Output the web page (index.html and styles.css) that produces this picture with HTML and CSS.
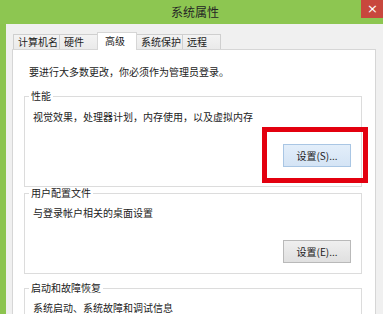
FILE: index.html
```html
<!DOCTYPE html>
<html lang="zh-CN">
<head>
<meta charset="utf-8">
<title>系统属性</title>
<link rel="stylesheet" href="styles.css">
</head>
<body>
<div class="window">
  <div class="titlebar">
    <span class="title">系统属性</span>
    <span class="close">×</span>
  </div>
  <div class="client">
    <div class="tabs">
      <div class="tab">计算机名</div>
      <div class="tab">硬件</div>
      <div class="tab active">高级</div>
      <div class="tab">系统保护</div>
      <div class="tab">远程</div>
    </div>
    <div class="panel">
      <p class="intro">要进行大多数更改，你必须作为管理员登录。</p>
      <fieldset class="group g1">
        <legend>性能</legend>
        <div class="group-body">
          <p class="desc">视觉效果，处理器计划，内存使用，以及虚拟内存</p>
          <div class="actions"><button class="btn btn-default">设置(S)...</button></div>
        </div>
      </fieldset>
      <fieldset class="group g2">
        <legend>用户配置文件</legend>
        <div class="group-body">
          <p class="desc">与登录帐户相关的桌面设置</p>
          <div class="actions"><button class="btn">设置(E)...</button></div>
        </div>
      </fieldset>
      <fieldset class="group g3">
        <legend>启动和故障恢复</legend>
        <div class="group-body">
          <p class="desc">系统启动、系统故障和调试信息</p>
        </div>
      </fieldset>
    </div>
  </div>
  <div class="highlight"></div>
</div>
</body>
</html>
```

FILE: styles.css
```css
html, body {
  margin: 0;
  padding: 0;
  background: #f0f0f0;
}

.window {
  position: relative;
  width: 383px;
  height: 314px;
  overflow: hidden;
  background: #8cc44f;
  font-family: "Noto Sans CJK SC", "Microsoft YaHei", sans-serif;
  font-size: 10px;
  color: #222;
}

.titlebar {
  height: 24px;
  display: flex;
  align-items: center;
  justify-content: center;
  padding-left: 7px;
  background: #8dc651;
}

.title {
  font-size: 12px;
  line-height: 14px;
  color: #262626;
}

.close {
  position: absolute;
  right: 0;
  top: 0;
  width: 21px;
  height: 18px;
  background: #c8473d;
  color: #fff;
  font-family: "DejaVu Sans", sans-serif;
  font-size: 13px;
  line-height: 17px;
  text-align: center;
  padding-left: 1px;
}

.client {
  margin-left: 6px;
  height: 290px;
  background: #f0f0f0;
  padding: 8px 7px 0 6px;
  box-sizing: border-box;
}

.tabs {
  display: flex;
  align-items: flex-end;
  margin-left: 1px;
}

.tab {
  box-sizing: border-box;
  height: 15px;
  min-width: 39px;
  padding: 0 1px 0 4px;
  border: 1px solid #cfcfcf;
  border-bottom: none;
  margin-right: -1px;
  background: linear-gradient(#f3f3f3, #eaeaea);
  line-height: 13px;
  white-space: nowrap;
}

.tab.active {
  position: relative;
  z-index: 1;
  height: 18px;
  min-width: 40px;
  padding-left: 7px;
  margin-bottom: -1px;
  background: #fff;
  border-color: #d6d6d6;
  line-height: 15px;
}

.panel {
  height: 300px;
  background: #fff;
  border: 1px solid #d6d6d6;
  padding: 15px 13px 0 11px;
  box-sizing: border-box;
}

.intro {
  margin: 0 0 0 5px;
  line-height: 14px;
}

.group {
  margin: 0;
  padding: 0;
  min-width: 0;
  border: 1px solid #dcdcdc;
}

.group legend {
  margin-left: 4px;
  padding: 0 2px;
  line-height: 12px;
}

.g1 { margin-top: 11px; }
.g2 { margin-top: 0; }
.g3 { margin-top: 8px; }

.group-body {
  padding: 7px 10px 10px 8px;
}

.g1 .group-body {
  padding-top: 8px;
  padding-bottom: 19px;
}

.desc {
  margin: 0;
  line-height: 14px;
}

.actions {
  display: flex;
  justify-content: flex-end;
  margin-top: 20px;
}

.btn {
  width: 68px;
  height: 23px;
  padding: 0;
  font-family: "Noto Sans CJK SC", "Microsoft YaHei", sans-serif;
  font-size: 10px;
  color: #222;
  border: 1px solid #b9b9b9;
  background: linear-gradient(#efefef, #e0e0e0);
  line-height: 21px;
}

.btn-default {
  border-color: #a9c6e4;
  background: linear-gradient(#e3eefa, #d4e4f5);
}

.highlight {
  position: absolute;
  left: 262px;
  top: 127px;
  width: 106px;
  height: 56px;
  box-sizing: border-box;
  border: 5px solid #e3000f;
}
```
